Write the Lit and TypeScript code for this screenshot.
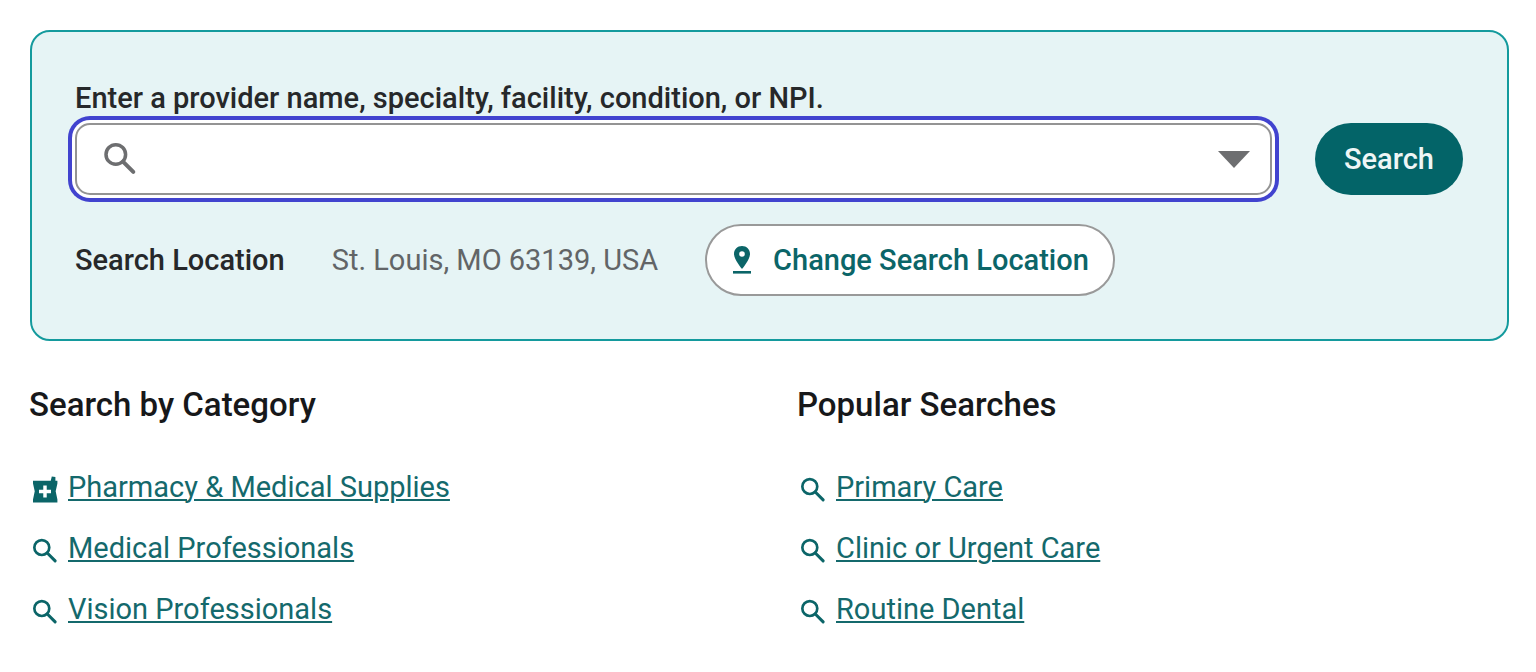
import { LitElement, html, css, svg } from "lit";
import { customElement } from "lit/decorators.js";

const search = svg`<g fill="none" stroke="currentColor" stroke-width="2"><circle cx="9.6" cy="9.4" r="5.6"/><path d="M13.7 13.5l5.900 5.900" stroke-width="2.300" stroke-linecap="round"/></g>`;
const pharmacy = svg`<path d="M21.300 5h-1.500V2.200L17.100 1.800 16.300 5H3v2.200l1.300 5.800L3 19.200V21.300h18.300v-2.100L20 13l1.300-5.800V5zM16.500 14.400h-3.200v3.200h-2.600v-3.200H7.500v-2.600h3.200V8.600h2.600v3.200h3.200v2.600z"/>`;
const pin = svg`<path fill-rule="evenodd" d="M16 2c-4.600 0-8 3.500-8 8 0 5.500 8 15 8 15s8-9.500 8-15c0-4.500-3.400-8-8-8zm0 5.200a2.800 2.800 0 1 1 0 5.600 2.800 2.800 0 0 1 0-5.600z"/><path d="M7 27h18v2.600H7z"/>`;

const categories = [
  { label: "Pharmacy & Medical Supplies", icon: pharmacy },
  { label: "Medical Professionals", icon: search },
  { label: "Vision Professionals", icon: search },
];
const popular = [
  { label: "Primary Care", icon: search },
  { label: "Clinic or Urgent Care", icon: search },
  { label: "Routine Dental", icon: search },
];

@customElement("app-root")
export class AppRoot extends LitElement {
  static styles = css`
    :host { display: block; font-family: Roboto, "Liberation Sans", sans-serif; color: #26282a; }
    * { box-sizing: border-box; }
    main { padding: 30px 27px 24px 30px; }
    svg { display: block; fill: currentColor; flex: none; }
    .panel { border: 2px solid #149a9d; border-radius: 20px; background: #e6f4f5; padding: 48px 44px 43px 43px; }
    .label { display: block; font-size: 29px; line-height: 36px; font-weight: 500; }
    .row { display: flex; align-items: center; gap: 43px; margin-top: 7px; }
    .field { flex: 1; display: flex; align-items: center; height: 72px; padding: 0 18px 0 22px; background: #fff; border: 2px solid #949494; border-radius: 15px; box-shadow: 0 0 0 3px #fff, 0 0 0 7px #4143cf; color: #6d6e70; }
    input { flex: 1; min-width: 0; border: 0; outline: 0; background: none; font: inherit; font-size: 29px; padding: 0 12px; }
    button { font: inherit; font-size: 29px; line-height: 36px; font-weight: 500; cursor: pointer; }
    .toggle { border: 0; background: none; padding: 0; color: inherit; }
    .submit { height: 72px; width: 148px; border: 0; border-radius: 36px; background: #036468; color: #eef6f6; padding: 0; }
    .location { display: flex; align-items: center; margin-top: 29px; font-size: 29px; line-height: 36px; }
    .location strong { font-weight: 500; }
    .place { margin: 0 47px; color: #626567; }
    .change { display: flex; align-items: center; gap: 15px; height: 72px; padding: 0 24px 0 19px; border: 2px solid #999; border-radius: 36px; background: #fff; color: #0b6568; }
    .columns { display: grid; grid-template-columns: 1fr 1fr; gap: 56px; margin: 44px 0 0 -1px; }
    h2 { margin: 0; font-size: 33px; line-height: 40px; font-weight: 500; color: #17181a; }
    ul { list-style: none; margin: 31px 0 0; padding: 0; }
    li { display: flex; align-items: center; gap: 7px; height: 61px; color: #0b6568; }
    li svg { margin-top: 6px; }
    a { color: #14696c; font-size: 29px; line-height: 36px; text-decoration: underline; text-decoration-thickness: 2px; text-underline-offset: 2px; }
  `;

  private list(title: string, items: typeof categories) {
    return html`<section>
      <h2>${title}</h2>
      <ul>
        ${items.map((item) => html`<li>
          <svg width="32" height="32" viewBox="0 0 24 24" aria-hidden="true">${item.icon}</svg>
          <a href="#">${item.label}</a>
        </li>`)}
      </ul>
    </section>`;
  }

  render() {
    return html`<main>
      <form class="panel" @submit=${(e: Event) => e.preventDefault()}>
        <label class="label" for="query">Enter a provider name, specialty, facility, condition, or NPI.</label>
        <div class="row">
          <div class="field">
            <svg width="42" height="42" viewBox="0 0 24 24" aria-hidden="true">${search}</svg>
            <input id="query" type="text" autocomplete="off" />
            <button class="toggle" type="button" aria-label="Show suggestions">
              <svg width="36" height="36" viewBox="0 0 36 36" aria-hidden="true"><path d="M2 10h32L18 27z"/></svg>
            </button>
          </div>
          <button class="submit" type="submit">Search</button>
        </div>
        <div class="location">
          <strong>Search Location</strong>
          <span class="place">St. Louis, MO 63139, USA</span>
          <button class="change" type="button">
            <svg width="32" height="32" viewBox="0 0 32 32" aria-hidden="true">${pin}</svg>
            Change Search Location
          </button>
        </div>
      </form>
      <div class="columns">
        ${this.list("Search by Category", categories)}
        ${this.list("Popular Searches", popular)}
      </div>
    </main>`;
  }
}
